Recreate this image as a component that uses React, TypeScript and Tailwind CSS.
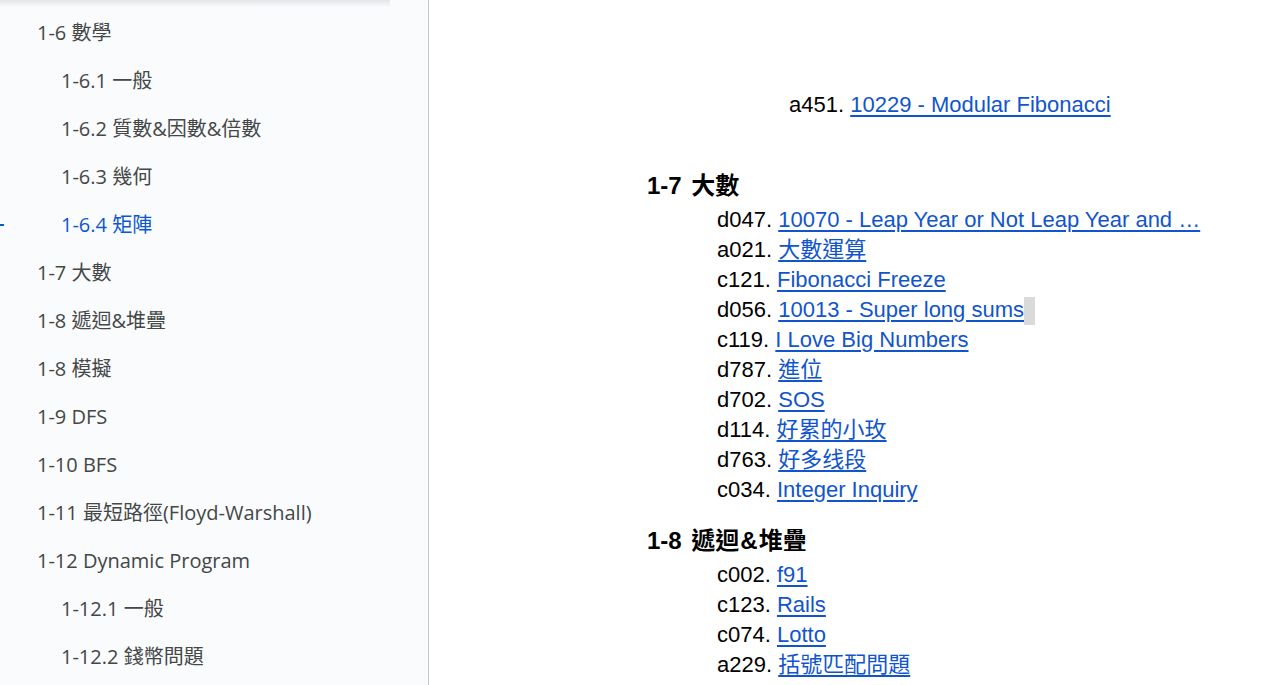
import React from 'react';

type NavItem = { label: string; level: 1 | 2; active?: boolean };

const navItems: NavItem[] = [
  { label: '1-6 數學', level: 1 },
  { label: '1-6.1 一般', level: 2 },
  { label: '1-6.2 質數&因數&倍數', level: 2 },
  { label: '1-6.3 幾何', level: 2 },
  { label: '1-6.4 矩陣', level: 2, active: true },
  { label: '1-7 大數', level: 1 },
  { label: '1-8 遞迴&堆疊', level: 1 },
  { label: '1-8 模擬', level: 1 },
  { label: '1-9 DFS', level: 1 },
  { label: '1-10 BFS', level: 1 },
  { label: '1-11 最短路徑(Floyd-Warshall)', level: 1 },
  { label: '1-12 Dynamic Program', level: 1 },
  { label: '1-12.1 一般', level: 2 },
  { label: '1-12.2 錢幣問題', level: 2 },
];

type Problem = { id: string; title: string; cursor?: boolean };

const bigNumbers: Problem[] = [
  { id: 'd047', title: '10070 - Leap Year or Not Leap Year and …' },
  { id: 'a021', title: '大數運算' },
  { id: 'c121', title: 'Fibonacci Freeze' },
  { id: 'd056', title: '10013 - Super long sums', cursor: true },
  { id: 'c119', title: 'I Love Big Numbers' },
  { id: 'd787', title: '進位' },
  { id: 'd702', title: 'SOS' },
  { id: 'd114', title: '好累的小玫' },
  { id: 'd763', title: '好多线段' },
  { id: 'c034', title: 'Integer Inquiry' },
];

const recursion: Problem[] = [
  { id: 'c002', title: 'f91' },
  { id: 'c123', title: 'Rails' },
  { id: 'c074', title: 'Lotto' },
  { id: 'a229', title: '括號匹配問題' },
];

function ProblemRow({ p }: { p: Problem }) {
  return (
    <div className="h-[30px] leading-[30px] whitespace-nowrap">
      {p.id}.{' '}
      <a href="#" className="text-[#1155cc] underline underline-offset-[3px]">
        {p.title}
      </a>
      {p.cursor && <span className="inline-block w-[11px] h-[28px] align-middle bg-[#dadada]" />}
    </div>
  );
}

export default function App() {
  return (
    <div className="flex h-[685px] w-[1266px] overflow-hidden bg-white">
      {/* Outline sidebar */}
      <aside
        className="relative w-[429px] shrink-0 h-full bg-[#f9fbfd] border-r border-[#c7c7c7] pt-[9px] text-[20px] text-[#444746]"
        style={{ fontFamily: '"Open Sans", "Noto Sans CJK TC", sans-serif' }}
      >
        <div className="absolute top-0 left-0 w-[390px] h-[7px] bg-gradient-to-b from-[#e3e5e8] to-transparent" />
        {navItems.map((item) => (
          <div
            key={item.label}
            className={`relative h-12 flex items-center whitespace-nowrap ${
              item.level === 1 ? 'pl-[37px]' : 'pl-[61px]'
            } ${item.active ? 'text-[#0b57d0]' : ''}`}
          >
            {item.active && <span className="absolute left-0 top-[23px] w-[4px] h-[2px] bg-[#0b57d0]" />}
            {item.label}
          </div>
        ))}
      </aside>

      {/* Document body */}
      <main
        className="flex-1 pl-[218px] pt-[90px] text-[22px] text-black"
        style={{ fontFamily: '"Liberation Sans", Arial, "Noto Sans CJK TC", sans-serif' }}
      >
        <div className="pl-[142px]">
          <ProblemRow p={{ id: 'a451', title: '10229 - Modular Fibonacci' }} />
        </div>

        <h2 className="mt-[47px] h-[38px] leading-[38px] text-[24px] font-bold whitespace-nowrap">
          1-7 <span className="ml-[3px]">大數</span>
        </h2>
        <div className="pl-[70px]">
          {bigNumbers.map((p) => (
            <ProblemRow key={p.id} p={p} />
          ))}
        </div>

        <h2 className="mt-[17px] h-[38px] leading-[38px] text-[24px] font-bold whitespace-nowrap">
          1-8{' '}
          <span className="ml-[3px]">
            遞迴<span className="mx-[1px]">&amp;</span>堆疊
          </span>
        </h2>
        <div className="pl-[70px]">
          {recursion.map((p) => (
            <ProblemRow key={p.id} p={p} />
          ))}
        </div>
      </main>
    </div>
  );
}
